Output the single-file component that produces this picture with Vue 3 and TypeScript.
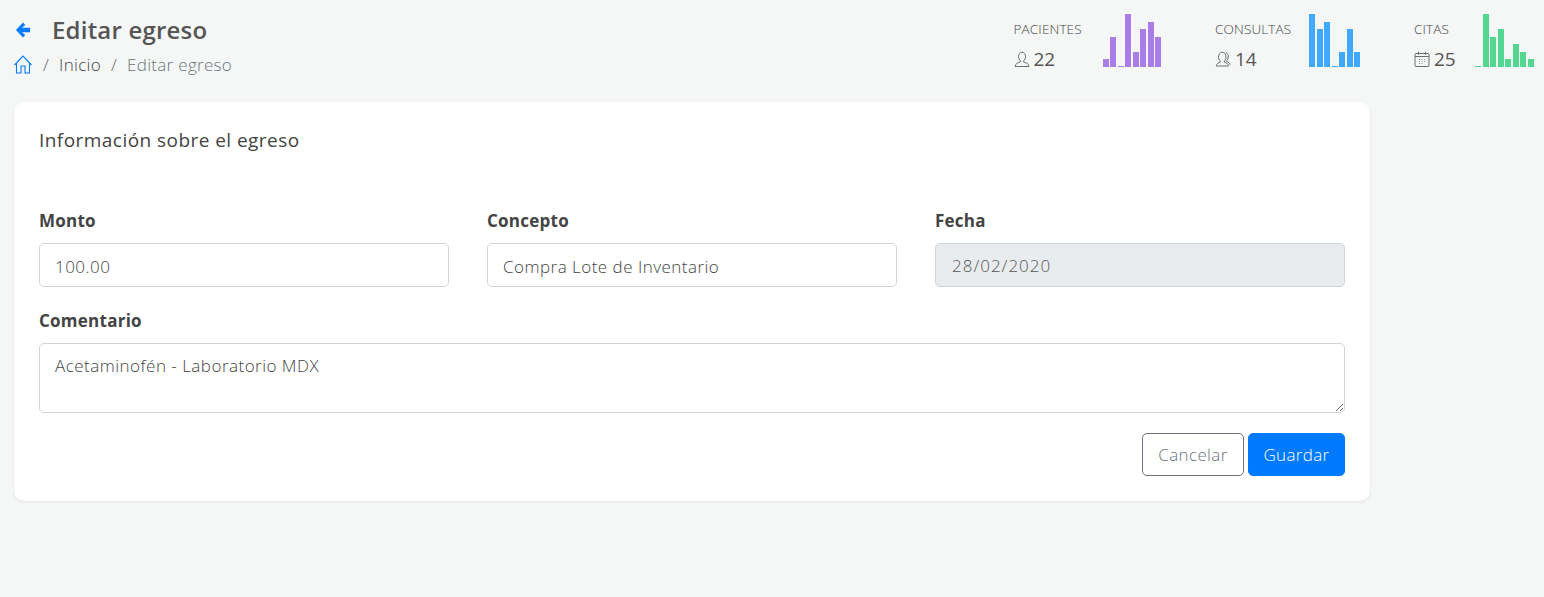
<script setup lang="ts">
interface Stat { label: string; value: number; icon: 'user' | 'users' | 'calendar'; color: string; bars: number[]; textWidth: number }
const stats: Stat[] = [
  { label: 'PACIENTES', value: 22, icon: 'user', color: '#a97de8', bars: [8, 30, 1, 53, 15, 38, 45, 30], textWidth: 70 },
  { label: 'CONSULTAS', value: 14, icon: 'users', color: '#3fa9ff', bars: [53, 38, 45, 1, 15, 38, 15], textWidth: 75 },
  { label: 'CITAS', value: 25, icon: 'calendar', color: '#53d690', bars: [1, 53, 30, 38, 8, 23, 15, 8], textWidth: 42 },
]
</script>

<template>
  <div class="page">
    <header class="top">
      <div class="heading">
        <div class="title-row">
          <svg class="back" width="16" height="16" viewBox="0 0 16 16" aria-hidden="true">
            <path d="M1 8 8 .5 10.200 3 7 5.700h8v4.600H7l3.200 2.700L8 15.500Z" fill="#007bff" />
          </svg>
          <h1>Editar egreso</h1>
        </div>
        <nav class="crumbs">
          <svg class="home" width="18" height="19" viewBox="0 0 18 19" aria-hidden="true">
            <path d="M.5 10 9 1l8.500 9M2.500 8v10H7v-7h4v7h4.500V8" fill="none" stroke="#007bff" stroke-width="1.100" />
          </svg>
          <span class="sep">/</span>
          <a>Inicio</a>
          <span class="sep">/</span>
          <span class="current">Editar egreso</span>
        </nav>
      </div>
      <div class="stats">
        <div v-for="s in stats" :key="s.label" class="stat">
          <div class="stat-text" :style="{ width: s.textWidth + 'px' }">
            <div class="stat-label">{{ s.label }}</div>
            <div class="stat-value">
              <svg v-if="s.icon === 'user'" width="16" height="16" viewBox="0 0 16 16" aria-hidden="true">
                <path d="M4.500 5.500C4.500 3 6 1.200 8 1.200s3.500 1.800 3.500 4.300c0 2-1 3.500-1.800 4.200v1.300c2 .6 4.800 1.300 5.300 4.500H1c.5-3.200 3.300-3.900 5.300-4.500V9.700C5.500 9 4.500 7.500 4.500 5.500Z" fill="none" stroke="#666" stroke-width=".95" />
              </svg>
              <svg v-else-if="s.icon === 'users'" width="16" height="16" viewBox="0 0 16 16" aria-hidden="true">
                <path d="M3.500 6C3.500 3.300 5 1.200 7.300 1.200S11 3.300 11 6c0 1.800-.9 3.300-1.600 4v1.200c1.800.6 3.600 1.300 4 3.800H1.200c.4-2.500 2.200-3.200 4-3.800V10C4.400 9.300 3.500 7.800 3.500 6Z" fill="none" stroke="#666" stroke-width=".95" />
                <path d="M11 1.500C12.800 2.300 13.500 4 13.300 6c-.1 1.500-.8 3-1.500 3.600v1c1.500.6 3 1.400 3.400 3.200" fill="none" stroke="#666" stroke-width=".95" />
              </svg>
              <svg v-else width="16" height="16" viewBox="0 0 16 16" aria-hidden="true">
                <rect x="1" y="2.500" width="14" height="13" rx="1" fill="none" stroke="#666" stroke-width=".95" />
                <path d="M1 5.500h14M4.500 .8v3M11.500 .8v3" fill="none" stroke="#666" stroke-width=".95" />
                <path d="M5 8.500h1M7.500 8.500h1M10 8.500h1M5 10.500h1M7.500 10.500h1M10 10.500h1M5 12.500h1M7.500 12.500h1" fill="none" stroke="#777" stroke-width=".8" />
              </svg>
              <span>{{ s.value }}</span>
            </div>
          </div>
          <div class="chart">
            <i v-for="(b, i) in s.bars" :key="i" class="bar" :style="{ height: b + 'px', background: s.color }"></i>
          </div>
        </div>
      </div>
    </header>

    <section class="card">
      <h2>Información sobre el egreso</h2>
      <form class="form" @submit.prevent>
        <div class="grid">
          <label class="field">
            <span>Monto</span>
            <input type="text" value="100.00" />
          </label>
          <label class="field">
            <span>Concepto</span>
            <input type="text" value="Compra Lote de Inventario" />
          </label>
          <label class="field">
            <span>Fecha</span>
            <input type="text" value="28/02/2020" disabled />
          </label>
        </div>
        <label class="field comment">
          <span>Comentario</span>
          <textarea>Acetaminofén - Laboratorio MDX</textarea>
        </label>
        <div class="actions">
          <button type="button" class="btn cancel">Cancelar</button>
          <button type="submit" class="btn save">Guardar</button>
        </div>
      </form>
    </section>
  </div>
</template>

<style>
html, body { margin: 0; background: #f5f7f7; }
</style>

<style scoped>
.page {
  height: 597px;
  box-sizing: border-box;
  background: #f5f7f7;
  padding: 0 10.500px 0 14px;
  font-family: "Open Sans", "Noto Sans", sans-serif;
  color: #444;
  overflow: hidden;
}
.top {
  display: flex;
  justify-content: space-between;
  align-items: flex-start;
  height: 102px;
}
.heading { padding-top: 14px; }
.title-row { display: flex; align-items: center; height: 32px; }
.back { margin: 0 21px 0 1px; }
h1 { margin: 0; font-size: 24px; font-weight: 600; letter-spacing: .2px; color: #555; line-height: 32px; }
.crumbs {
  display: flex;
  align-items: center;
  margin-top: 7px;
  height: 22px;
  font-size: 17px;
  font-weight: 300;
  letter-spacing: .3px;
  color: #444;
}
.sep { margin: 0 10px 0 11px; color: #666; }
.sep + a + .sep { margin-left: 10px; }
.current { color: #6c757d; }
.stats { display: flex; gap: 54px; padding-top: 14px; }
.stat { display: flex; gap: 19px; }
.stat-label { font-size: 13.500px; font-weight: 300; letter-spacing: .15px; color: #444; line-height: 16px; margin-top: 7px; white-space: nowrap; }
.stat-value {
  display: flex;
  align-items: center;
  gap: 4px;
  margin-top: 11px;
  font-size: 19px;
  line-height: 22px;
  color: #555;
}
.chart { display: flex; align-items: flex-end; gap: 1.500px; height: 53px; }
.bar { display: block; width: 6px; }
.card {
  box-sizing: border-box;
  width: 1356px;
  height: 399px;
  background: #fff;
  border-radius: 10px;
  box-shadow: 0 1px 3px rgba(0, 0, 0, .08);
  padding: 25px;
}
h2 { margin: 0; font-size: 19px; font-weight: 400; letter-spacing: .45px; line-height: 26px; color: #444; }
.form { margin-top: 56px; }
.grid { display: grid; grid-template-columns: repeat(3, 410px); column-gap: 38px; }
.field { display: block; }
.field > span { display: block; font-size: 17px; font-weight: 700; letter-spacing: .25px; line-height: 24px; color: #444; margin-bottom: 10px; }
.comment { margin-top: 22px; }
input, textarea {
  display: block;
  box-sizing: border-box;
  width: 100%;
  border: 1px solid #ced4da;
  border-radius: 5px;
  background: #fff;
  padding: 0 15px;
  font: 300 17px "Open Sans", "Noto Sans", sans-serif;
  letter-spacing: .48px;
  color: #444;
  outline: none;
}
input { height: 44px; padding-top: 3px; }
input:disabled { background: #e9ecef; padding-left: 16px; padding-top: 1px; color: #555; letter-spacing: 1px; }
textarea { height: 70px; padding-top: 10px; line-height: 24px; }
.actions { display: flex; justify-content: flex-end; gap: 4px; margin-top: 20px; }
.btn {
  box-sizing: border-box;
  height: 43px;
  border-radius: 5px;
  font: 300 17px "Open Sans", "Noto Sans", sans-serif;
  letter-spacing: .35px;
  padding: 0;
}
.cancel { width: 102px; background: #fff; border: 1px solid #6c757d; color: #6c757d; }
.save { width: 97px; background: #007bff; border: 1px solid #007bff; color: #fff; }
</style>
